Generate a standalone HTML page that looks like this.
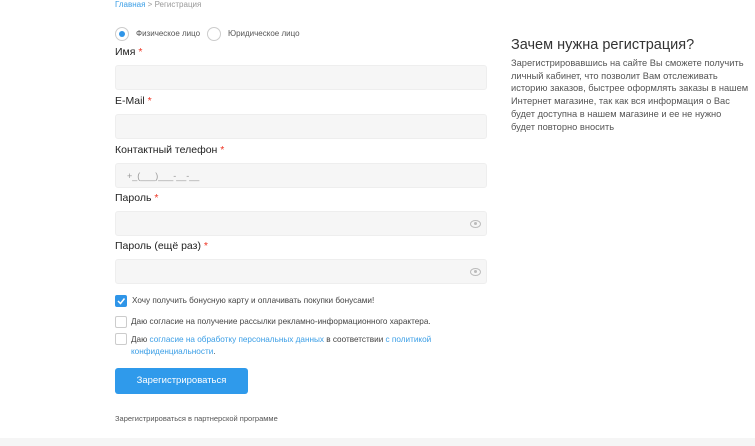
<!DOCTYPE html>
<html><head><meta charset="utf-8"><style>
*{margin:0;padding:0;box-sizing:border-box}
body{width:755px;height:446px;background:#fff;font-family:"Liberation Sans",sans-serif;color:#333;position:relative;overflow:hidden}
.a{position:absolute;white-space:nowrap}
.crumb{left:115px;top:0px;font-size:8px;color:#999}
.crumb b{font-weight:normal;color:#3a9ee6}
.radio{width:14px;height:14px;border:1px solid #ccc;border-radius:50%;position:absolute}
.lbl{left:115px;font-size:10.5px;color:#222}
.lbl i{color:#e32;font-style:normal}
.inp{left:115px;width:372px;height:25px;background:#f6f6f6;border:1px solid #eee;border-radius:3px;position:absolute}
.eye{position:absolute;right:5px;top:8px;width:11px;height:8px;border:1.5px solid #bbb;border-radius:50%}
.eye:after{content:"";position:absolute;left:2.5px;top:1px;width:3px;height:3px;border-radius:50%;background:#bbb}
.cb{position:absolute;left:115px;width:12px;height:12px;border:1px solid #ccc;border-radius:2px;background:#fff}
.t{font-size:8.2px;color:#444;left:132px}
.lk{color:#3a9ee6}
</style></head><body>
<div class="a crumb"><b>Главная</b> &gt; Регистрация</div>
<div class="radio" style="left:115px;top:27px;border-color:#ccc"><div style="position:absolute;left:3px;top:3px;width:6px;height:6px;border-radius:50%;background:#2f95e8"></div></div>
<div class="a" style="left:136px;top:29px;font-size:8px;color:#555">Физическое лицо</div>
<div class="radio" style="left:207px;top:27px"></div>
<div class="a" style="left:228px;top:29px;font-size:8px;color:#555">Юридическое лицо</div>

<div class="a lbl" style="top:46px">Имя <i>*</i></div>
<div class="inp" style="top:65px"></div>
<div class="a lbl" style="top:95px">E-Mail <i>*</i></div>
<div class="inp" style="top:114px"></div>
<div class="a lbl" style="top:144px">Контактный телефон <i>*</i></div>
<div class="inp" style="top:163px"><span class="a" style="left:11px;top:7px;font-size:9px;color:#999">+_(___)___-__-__</span></div>
<div class="a lbl" style="top:192px">Пароль <i>*</i></div>
<div class="inp" style="top:211px"><div class="eye"></div></div>
<div class="a lbl" style="top:240px">Пароль (ещё раз) <i>*</i></div>
<div class="inp" style="top:259px"><div class="eye"></div></div>

<div class="cb" style="top:295px;background:#2f95e8;border-color:#2f95e8"><svg width="10" height="10" style="position:absolute;left:0;top:0"><path d="M2 5 L4.5 7.5 L8.5 2.5" stroke="#fff" stroke-width="1.5" fill="none"/></svg></div>
<div class="a t" style="top:296px">Хочу получить бонусную карту и оплачивать покупки бонусами!</div>
<div class="cb" style="top:316px"></div>
<div class="a t" style="left:131px;top:317px">Даю согласие на получение рассылки рекламно-информационного характера.</div>
<div class="cb" style="top:333px"></div>
<div class="a t" style="left:131px;top:334px;line-height:12px">Даю <span class="lk">согласие на обработку персональных данных</span> в соответствии <span class="lk">с политикой<br>конфиденциальности</span>.</div>

<div class="a" style="left:115px;top:368px;width:133px;height:26px;background:#2f9aeb;border-radius:3px;color:#fff;font-size:9.5px;text-align:center;line-height:26px">Зарегистрироваться</div>
<div class="a" style="left:115px;top:414px;font-size:7.5px;color:#555">Зарегистрироваться в партнерской программе</div>

<div class="a" style="left:511px;top:37px;font-size:14.5px;color:#333">Зачем нужна регистрация?</div>
<div class="a" style="left:511px;top:57px;font-size:9.3px;line-height:12.7px;color:#555">Зарегистрировавшись на сайте Вы сможете получить<br>личный кабинет, что позволит Вам отслеживать<br>историю заказов, быстрее оформлять заказы в нашем<br>Интернет магазине, так как вся информация о Вас<br>будет доступна в нашем магазине и ее не нужно<br>будет повторно вносить</div>

<div class="a" style="left:0;top:438px;width:755px;height:8px;background:#f5f5f5"></div>
</body></html>
